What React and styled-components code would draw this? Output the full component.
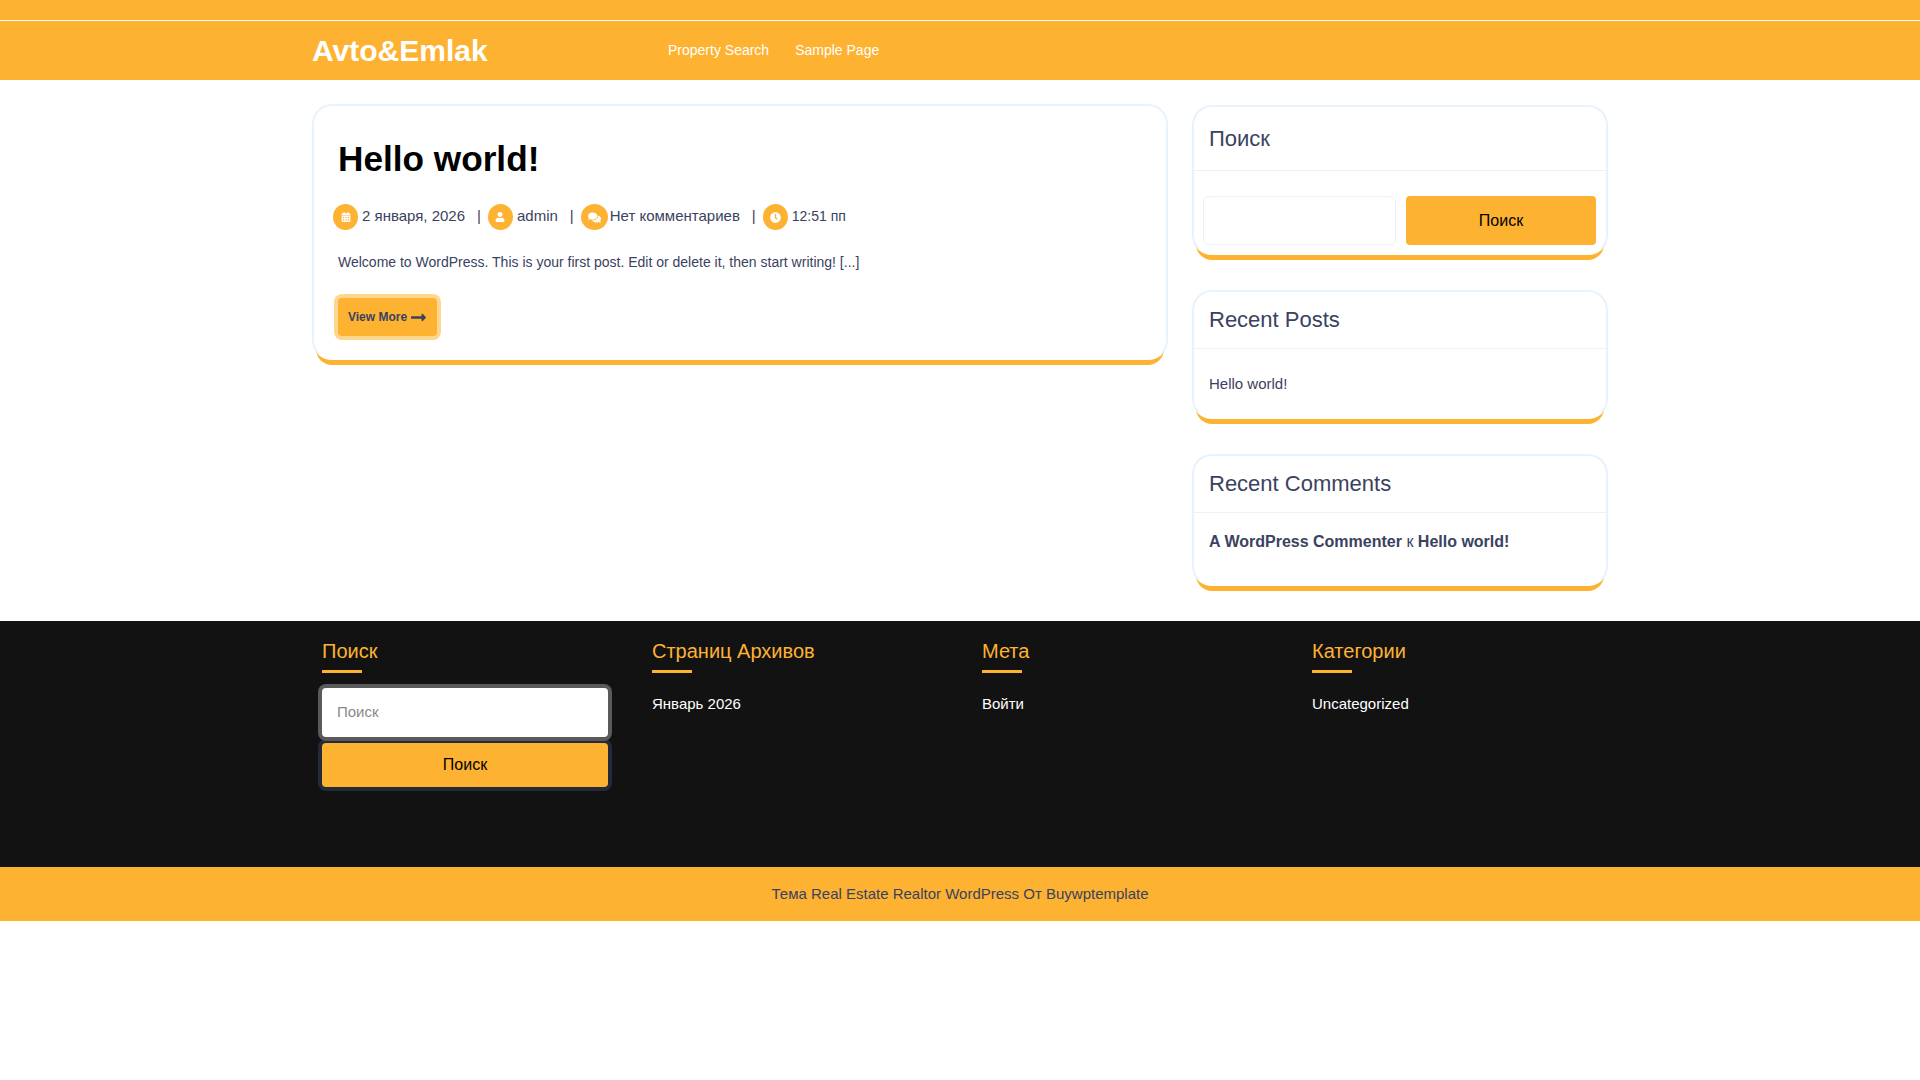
import React from "react";
import styled, { createGlobalStyle } from "styled-components";
import { FaCalendarAlt, FaUser, FaComments, FaClock, FaLongArrowAltRight } from "react-icons/fa";

const orange = "#fdb232";
const ink = "#3a4260";
const line = "#e8f2fc";

const Global = createGlobalStyle`
  html, body { margin: 0; padding: 0; background: #fff; }
  body { font-family: "Liberation Sans", Arial, sans-serif; color: ${ink}; font-size: 15px; }
  * { box-sizing: border-box; }
`;

const Header = styled.header`
  background: ${orange};
  height: 80px;
  padding-top: 20px;
`;
const HeaderRule = styled.div`
  height: 1px;
  background: #fff;
`;
const Wrap = styled.div`
  width: 1296px;
  margin: 0 auto;
`;
const HeaderRow = styled(Wrap)`
  display: flex;
  align-items: center;
  height: 59px;
`;
const Logo = styled.div`
  width: 356px;
  color: #fff;
  font-size: 30px;
  font-weight: 700;
`;
const Nav = styled.nav`
  display: flex;
  gap: 26px;
`;
const NavLink = styled.a`
  color: #fff;
  font-size: 14px;
  position: relative;
  top: -1px;
`;
const Main = styled(Wrap)`
  display: flex;
  gap: 24px;
  align-items: flex-start;
  padding-top: 24px;
`;
const Card = styled.div`
  background: #fff;
  border: 2px solid ${line};
  border-bottom-color: #fff;
  border-radius: 20px;
  box-shadow: 0 9px 0 -4px ${orange};
`;
const Post = styled(Card)`
  width: 856px;
  height: 256px;
  padding: 32px 24px 0;
`;
const PostTitle = styled.h1`
  margin: 0;
  color: #000;
  font-size: 35.2px;
  line-height: 42px;
  font-weight: 700;
`;
const Meta = styled.div`
  display: flex;
  align-items: center;
  margin: 24px 0 0 -5px;
  height: 26px;
`;
const MetaIcon = styled.span`
  width: ${(p) => p.$w || 25}px;
  height: 26px;
  border-radius: 50%;
  background: ${orange};
  color: #fff;
  display: flex;
  align-items: center;
  justify-content: center;
  margin-right: ${(p) => p.$m ?? 4}px;
  flex: none;
  font-size: ${(p) => p.$s || 10}px;
`;
const MetaText = styled.span`
  font-size: ${(p) => p.$f || 15}px;
  position: relative;
  top: ${(p) => (p.$f ? -1 : -2)}px;
  white-space: pre;
`;
const Sep = styled.span`
  font-size: 15px;
  margin: 0 7px 0 12px;
  position: relative;
  top: -2px;
`;
const Excerpt = styled.p`
  margin: 22px 0 0;
  font-size: 14px;
  line-height: 20px;
`;
const More = styled.a`
  display: inline-flex;
  align-items: center;
  gap: 4px;
  margin: 26px 0 0;
  height: 38px;
  width: 99px;
  padding: 0 10px;
  background: ${orange};
  border-radius: 4px;
  box-shadow: 0 0 0 4px #fed78f;
  color: ${ink};
  font-size: 12px;
  font-weight: 700;
  white-space: nowrap;
  svg { font-size: 17px; flex: none; margin: 0 -1px; }
`;
const Side = styled.aside`
  width: 416px;
  display: flex;
  flex-direction: column;
  gap: 35px;
`;
const Widget = styled(Card)`
  height: ${(p) => p.$h}px;
  margin-top: ${(p) => p.$t || 0}px;
`;
const WidgetHead = styled.h2`
  margin: 0;
  height: ${(p) => p.$h}px;
  padding: ${(p) => p.$p}px 15px 0;
  font-weight: 400;
  font-size: 22px;
  line-height: 28px;
  border-bottom: 1px solid ${line};
`;
const SearchRow = styled.div`
  display: flex;
  gap: 10px;
  padding: 25px 9px 0 9px;
`;
const SearchInput = styled.input`
  width: 193px;
  height: 49px;
  border: 1px solid ${line};
  border-radius: 6px;
  background: #fff;
  outline: none;
`;
const SearchBtn = styled.button`
  width: 190px;
  height: 49px;
  border: 0;
  border-radius: 4px;
  background: ${orange};
  color: #000;
  font: 400 16px "Liberation Sans", Arial, sans-serif;
`;
const WidgetLink = styled.div`
  padding: ${(p) => p.$p}px 15px 0;
  font-size: ${(p) => p.$f}px;
  line-height: 20px;
`;
const Bold = styled.b`
  font-weight: 700;
`;
const Footer = styled.footer`
  margin-top: 35px;
  background: #121212;
  height: 246px;
`;
const FooterGrid = styled.div`
  width: 1320px;
  margin: 0 auto;
  display: grid;
  grid-template-columns: repeat(4, 330px);
  padding: 18px 0 0 22px;
`;
const FooterCol = styled.div``;
const FooterTitle = styled.h3`
  margin: 0;
  color: ${orange};
  font-size: 20px;
  line-height: 24px;
  font-weight: 400;
  position: relative;
  padding-bottom: 10px;
  &::after {
    content: "";
    position: absolute;
    left: 0;
    bottom: 0;
    width: 40px;
    height: 3px;
    background: ${orange};
  }
`;
const FooterLink = styled.div`
  color: #fff;
  font-size: 15px;
  line-height: 20px;
  margin-top: 21px;
`;
const FooterForm = styled.div`
  display: flex;
  flex-direction: column;
  width: 286px;
  margin-top: 15px;
`;
const FooterInput = styled.input`
  position: relative;
  z-index: 1;
  width: 286px;
  height: 49px;
  padding: 0 15px 2px;
  border: 0;
  border-radius: 4px;
  background: #fff;
  box-shadow: 0 0 0 4px #5a5a5a;
  font: 400 15px "Liberation Sans", Arial, sans-serif;
  outline: none;
  &::placeholder { color: #8a8a8a; opacity: 1; }
`;
const FooterBtn = styled.button`
  width: 286px;
  height: 44px;
  margin-top: 6px;
  border: 0;
  border-radius: 4px;
  background: ${orange};
  box-shadow: 0 0 0 4px #252a3a;
  color: #000;
  font: 400 16px "Liberation Sans", Arial, sans-serif;
`;
const Copy = styled.div`
  background: ${orange};
  height: 54px;
  padding-bottom: 2px;
  display: flex;
  align-items: center;
  justify-content: center;
  font-size: 15px;
`;

export default function App() {
  return (
    <>
      <Global />
      <Header>
        <HeaderRule />
        <HeaderRow>
          <Logo>Avto&amp;Emlak</Logo>
          <Nav>
            <NavLink>Property Search</NavLink>
            <NavLink>Sample Page</NavLink>
          </Nav>
        </HeaderRow>
      </Header>
      <Main>
        <Post>
          <PostTitle>Hello world!</PostTitle>
          <Meta>
            <MetaIcon><FaCalendarAlt /></MetaIcon>
            <MetaText>2 января, 2026</MetaText>
            <Sep>|</Sep>
            <MetaIcon><FaUser /></MetaIcon>
            <MetaText>admin</MetaText>
            <Sep>|</Sep>
            <MetaIcon $w={27} $s={13} $m={2}><FaComments /></MetaIcon>
            <MetaText>Нет комментариев</MetaText>
            <Sep>|</Sep>
            <MetaIcon $s={11}><FaClock /></MetaIcon>
            <MetaText $f={14}>12:51 пп</MetaText>
          </Meta>
          <Excerpt>Welcome to WordPress. This is your first post. Edit or delete it, then start writing! [...]</Excerpt>
          <More>View More <FaLongArrowAltRight /></More>
        </Post>
        <Side>
          <Widget $h={150} $t={1}>
            <WidgetHead $h={64} $p={18}>Поиск</WidgetHead>
            <SearchRow>
              <SearchInput />
              <SearchBtn>Поиск</SearchBtn>
            </SearchRow>
          </Widget>
          <Widget $h={129}>
            <WidgetHead $h={57} $p={14}>Recent Posts</WidgetHead>
            <WidgetLink $p={25} $f={15}>Hello world!</WidgetLink>
          </Widget>
          <Widget $h={132}>
            <WidgetHead $h={57} $p={14}>Recent Comments</WidgetHead>
            <WidgetLink $p={19} $f={16}><Bold>A WordPress Commenter</Bold> к <Bold>Hello world!</Bold></WidgetLink>
          </Widget>
        </Side>
      </Main>
      <Footer>
        <FooterGrid>
          <FooterCol>
            <FooterTitle>Поиск</FooterTitle>
            <FooterForm>
              <FooterInput placeholder="Поиск" />
              <FooterBtn>Поиск</FooterBtn>
            </FooterForm>
          </FooterCol>
          <FooterCol>
            <FooterTitle>Страниц Архивов</FooterTitle>
            <FooterLink>Январь 2026</FooterLink>
          </FooterCol>
          <FooterCol>
            <FooterTitle>Мета</FooterTitle>
            <FooterLink>Войти</FooterLink>
          </FooterCol>
          <FooterCol>
            <FooterTitle>Категории</FooterTitle>
            <FooterLink>Uncategorized</FooterLink>
          </FooterCol>
        </FooterGrid>
      </Footer>
      <Copy>Тема Real Estate Realtor WordPress От Buywptemplate</Copy>
    </>
  );
}
